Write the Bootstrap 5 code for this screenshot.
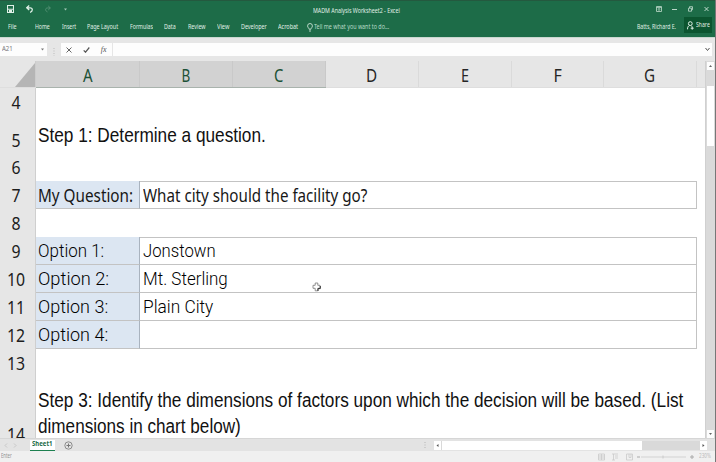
<!DOCTYPE html>
<html lang="en">
<head>
<meta charset="utf-8">
<meta name="viewport" content="width=device-width, initial-scale=1">
<title>MADM Analysis Worksheet2 - Excel</title>
<link href="https://cdn.jsdelivr.net/npm/bootstrap@5.3.0/dist/css/bootstrap.min.css" rel="stylesheet">
<style>
html,body{height:462px;overflow:hidden}
body{font:6.6px/1 "Noto Sans","Open Sans",sans-serif;color:#555;background:#e6e6e6}
svg{display:block;fill:none;stroke:currentColor;flex:none}
.app{width:716px;height:462px;border-right:1px solid #777}
.ribbon{height:37px;background:#1d6c48;color:#e0f0e7;border-top:1px solid #24593f}
.titlebar{height:16px;display:grid;grid-template-columns:7px 19px 19px 19px 249px 1fr 16px 16px 16px 11px}
.menus{height:20px;display:grid;grid-template-columns:8px 27px 27px 25px 43px 34px 24px 29px 24px 37px 29px 7px 1fr 47px 28px;padding-right:3px}
.menus>*,.titlebar>*{display:flex;align-items:center;min-width:0}
.share{background:#0c5530;height:16px;padding-left:3px;gap:2px}
.tell{color:#b9dcc9}
.fbar{height:24px;padding-top:5px;border-top:1px solid #c9d8d0}
.fbox{background:#fdfdfd;height:13px}
.namebox{width:47px;padding:0 3px 0 2px;color:#777}
.fdots{width:14px;color:#bbb}
.ftools{width:51px;margin-right:1px}
.finput{margin-right:3px;padding-right:2px}
.sheet{height:377px}
.gridarea{width:705px;background:#fff;overflow:hidden}
.heads,.sheetrow{display:grid;grid-template-columns:36px 104px 93px 93px 93px 93px 92px 93px 8px}
.heads{height:27px;background:#e6e6e6;font-size:18px;line-height:28px;color:#262626;text-align:center;border-bottom:1px solid #dedede}
.heads>div{border-right:1px solid #dadada;height:26px}
.heads>.picked{background:#d2d2d2;color:#1c5136;border-right-color:#c9c9c9;box-shadow:0 1px #a9b3ad}
.heads>.corner{border-right:1px solid #ccc}
.corner svg{margin-left:15px}
.sheetrow{grid-template-columns:36px 104px 557px;height:28px}
.num{background:#e6e6e6;border-right:1px solid #cfcfcf;border-bottom:1px solid #d4d4d4;font-size:17.6px;text-align:center;line-height:28px;color:#1d1d1d;padding-right:2px}
.r4{height:27px}.r5{height:38px}.r14{height:63px}
.r5 .num{padding-top:11px}
.r13{height:27px}
.r14 .num{padding-top:46px;line-height:24px;border-bottom:0}
.lab,.val{white-space:nowrap;color:#171717;font-size:18px;line-height:28px;padding-left:3px;border-bottom:1px solid #c3c3c3;border-right:1px solid #c3c3c3;height:28px}
.lab{background:#dce6f2;border-right-color:#a9b3bf;padding-left:2px}
.opt .lab,.opt .val{font-family:Roboto,sans-serif;font-weight:300;font-size:18.8px;color:#000}
.r6 .edge,.r8 .edge{border-bottom:1px solid #c3c3c3;grid-column:2/4}
.step{grid-column:2/4;font:20.4px/26px "Liberation Sans",Arial,sans-serif;color:#111;padding:7px 0 0 2px;white-space:nowrap}
.r14 .step{font-size:20px;padding-top:11px}
.fit{display:inline-block;white-space:nowrap;transform-origin:0 50%}
.num .fit,.heads .fit,.sheettab .fit{transform-origin:50% 50%}
.vscroll{width:10px;background:#dadada;padding:1px 1px 0 1px;border-left:1px solid #d0d0d0}
.vbtn{height:8px;background:#fdfdfd;width:7px}
.vthumb{height:60px;margin-top:16px;background:#fff;width:7px}
.tabs-row{height:13px;background:#e3e3e3;border-top:1px solid #d6d6d6}
.sheettab{width:25px;height:11px;background:#fff;color:#1d6c48;font-weight:700;border-bottom:1px solid #1d8050;margin-left:13px}
.addtab{margin-left:9px}
.track{margin-left:1px}
.zoomlevel{color:#bbb}
.hscroll{width:273px;margin-right:8px;height:9px;background:#d9d9d9}
.status{height:11px;background:#f0f0f0;color:#909090;padding:0 4px 0 1px}
.fx{font-family:"Liberation Serif",serif;font-size:8px}
.pointer{position:absolute;left:312px;top:282px}
</style>
</head>
<body>
<div class="app d-flex flex-column">
  <header class="ribbon">
    <div class="titlebar">
      <div></div>
      <div><svg width="7" height="8" viewBox="0 0 7 8"><path d="M.5.5h6v7h-6zM1 4.2h5" stroke-width="1.1"/><path d="M2 5h3v2.5H2z" fill="currentColor" stroke="none"/></svg></div>
      <div><svg width="7" height="8" viewBox="0 0 7 8"><path d="M3.2.5.7 2.8l2.5 2.3M.9 2.8h3.2c3 0 2.8 3.7 0 4.6" stroke-width="1.3"/></svg></div>
      <div><svg width="6" height="8" viewBox="0 0 7 8" opacity=".3"><path d="m3.8.5 2.5 2.3-2.5 2.3M6.1 2.8H2.9c-3 0-2.8 3.7 0 4.6"/></svg></div>
      <div><svg width="3" height="3" viewBox="0 0 3 3" opacity=".7"><path d="M0 .5h3L1.5 2.5z" fill="currentColor" stroke="none"/></svg></div>
      <div class="pt-1"><span class="fit" data-w="87">MADM Analysis Worksheet2 - Excel</span></div>
      <div><svg width="6" height="6" viewBox="0 0 6 6" opacity=".75"><path d="M.5.5h5v5h-5zM.5 1.6h5M3 5V2.5M2 3.5l1-1 1 1" stroke-width=".9"/></svg></div>
      <div><svg width="5" height="6" viewBox="0 0 5 6" opacity=".8"><path d="M0 3.5h5"/></svg></div>
      <div><svg width="5" height="6" viewBox="0 0 5 6" opacity=".85"><path d="M.5 2.2h3v3h-3zM1.5 2V.7h3v3H3.7" stroke-width=".8"/></svg></div>
      <div><svg width="5" height="6" viewBox="0 0 5 6"><path d="m.5 1 4 4m0-4-4 4" stroke-width=".8"/></svg></div>
    </div>
    <nav class="menus">
      <div></div>
      <div><span class="fit" data-w="9">File</span></div>
      <div><span class="fit" data-w="15">Home</span></div>
      <div><span class="fit" data-w="14">Insert</span></div>
      <div><span class="fit" data-w="31">Page Layout</span></div>
      <div><span class="fit" data-w="23">Formulas</span></div>
      <div><span class="fit" data-w="12">Data</span></div>
      <div><span class="fit" data-w="18">Review</span></div>
      <div><span class="fit" data-w="12">View</span></div>
      <div><span class="fit" data-w="26">Developer</span></div>
      <div><span class="fit" data-w="20">Acrobat</span></div>
      <div><svg width="6" height="9" viewBox="0 0 6 9"><path d="M2 6.2C2 5 .6 4.6.6 2.9a2.400 2.400 0 0 1 4.800 0C5.400 4.600 4 5 4 6.200zM2 8h2" stroke-width=".8"/></svg></div>
      <div class="tell"><span class="fit" data-w="75">Tell me what you want to do...</span></div>
      <div><span class="fit" data-w="39">Batts, Richard E.</span></div>
      <div class="share"><svg width="7" height="9" viewBox="0 0 7 9"><circle cx="3.300" cy="2.600" r="1.900"/><path d="M.5 8.300C.5 6 1.300 5 2.500 4.500M4 4.500l1 1.200M3.700 7.200h3M5.200 5.700v3"/></svg><span class="fit" data-w="14">Share</span></div>
    </nav>
  </header>

  <div class="fbar d-flex">
    <div class="fbox namebox d-flex align-items-center justify-content-between"><span class="fit" data-w="11">A21</span><svg width="3" height="3" viewBox="0 0 3 3"><path d="M0 .5h3L1.500 2.500z" fill="currentColor" stroke="none"/></svg></div>
    <div class="fdots d-flex align-items-center justify-content-center"><svg width="2" height="8" viewBox="0 0 2 8"><path d="M1 0v8" stroke-dasharray="1 1.500"/></svg></div>
    <div class="fbox ftools d-flex align-items-center justify-content-around">
      <svg width="6" height="6" viewBox="0 0 6 6"><path d="m.5.5 5 5m0-5-5 5" stroke-width=".9"/></svg>
      <svg width="7" height="6" viewBox="0 0 7 6"><path d="m.7 3.300 1.800 1.900L6.300.5" stroke-width="1.200"/></svg>
      <i class="fx">fx</i>
    </div>
    <div class="fbox finput flex-grow-1 d-flex align-items-center justify-content-end"><svg width="5" height="5" viewBox="0 0 5 5"><path d="m.5 1 2 2.500 2-2.500"/></svg></div>
  </div>

  <main class="sheet d-flex">
    <div class="gridarea">
      <div class="heads">
        <div class="corner"><svg width="20" height="26" viewBox="0 0 20 26"><path d="M20 2v24H0z" fill="#b5b5b5" stroke="none"/></svg></div>
        <div class="picked"><span class="fit" data-w="10">A</span></div>
        <div class="picked"><span class="fit" data-w="9">B</span></div>
        <div class="picked"><span class="fit" data-w="9">C</span></div>
        <div><span class="fit" data-w="11">D</span></div>
        <div><span class="fit" data-w="8">E</span></div>
        <div><span class="fit" data-w="8">F</span></div>
        <div><span class="fit" data-w="11">G</span></div>
      </div>
      <div class="sheetrow r4"><div class="num"><span class="fit" data-w="9">4</span></div></div>
      <div class="sheetrow r5"><div class="num"><span class="fit" data-w="9">5</span></div><div class="step"><span class="fit" data-w="228">Step 1: Determine a question.</span></div></div>
      <div class="sheetrow r6"><div class="num"><span class="fit" data-w="9">6</span></div><div class="edge"></div></div>
      <div class="sheetrow"><div class="num"><span class="fit" data-w="9">7</span></div><div class="lab"><span class="fit" data-w="95">My Question:</span></div><div class="val"><span class="fit" data-w="224">What city should the facility go?</span></div></div>
      <div class="sheetrow r8"><div class="num"><span class="fit" data-w="9">8</span></div><div class="edge"></div></div>
      <div class="sheetrow opt"><div class="num"><span class="fit" data-w="9">9</span></div><div class="lab"><span class="fit" data-w="66">Option 1:</span></div><div class="val"><span class="fit" data-w="73">Jonstown</span></div></div>
      <div class="sheetrow opt"><div class="num"><span class="fit" data-w="18">10</span></div><div class="lab"><span class="fit" data-w="71">Option 2:</span></div><div class="val"><span class="fit" data-w="85">Mt. Sterling</span></div></div>
      <div class="sheetrow opt"><div class="num"><span class="fit" data-w="18">11</span></div><div class="lab"><span class="fit" data-w="70">Option 3:</span></div><div class="val"><span class="fit" data-w="70">Plain City</span></div></div>
      <div class="sheetrow opt"><div class="num"><span class="fit" data-w="18">12</span></div><div class="lab"><span class="fit" data-w="70">Option 4:</span></div><div class="val"></div></div>
      <div class="sheetrow r13"><div class="num"><span class="fit" data-w="18">13</span></div></div>
      <div class="sheetrow r14"><div class="num"><span class="fit" data-w="18">14</span></div><div class="step"><span class="fit" data-w="645">Step 3: Identify the dimensions of factors upon which the decision will be based. (List</span><br><span class="fit" data-w="203">dimensions in chart below)</span></div></div>
    </div>
    <div class="vscroll d-flex flex-column">
      <div class="vbtn d-flex align-items-center justify-content-center"><svg width="3" height="2" viewBox="0 0 3 2"><path d="M0 2h3L1.500 0z" fill="#666" stroke="none"/></svg></div>
      <div class="vthumb"></div>
      <div class="vbtn mt-auto d-flex align-items-center justify-content-center"><svg width="3" height="2" viewBox="0 0 3 2"><path d="M0 0h3L1.500 2z" fill="#666" stroke="none"/></svg></div>
    </div>
  </main>

  <div class="tabs-row d-flex align-items-center">
    <svg class="ms-1" width="13" height="5" viewBox="0 0 13 5"><path d="M3 .5 1 2.500l2 2M10 .5l2 2-2 2" stroke-width=".8" stroke="#c0c0c0"/></svg>
    <div class="sheettab d-flex align-items-center justify-content-center"><span class="fit" data-w="20">Sheet1</span></div>
    <svg class="addtab" width="9" height="9" viewBox="0 0 9 9"><g stroke="#777"><circle cx="4.500" cy="4.500" r="3.700" stroke-width=".8"/><path d="M2.500 4.500h4M4.500 2.500v4"/></g></svg>
    <svg class="ms-auto me-2" width="2" height="7" viewBox="0 0 2 7"><path d="M1 0v7" stroke-dasharray="1 1.500" stroke="#b5b5b5"/></svg>
    <div class="hscroll d-flex justify-content-between">
      <div class="d-flex">
        <svg width="7" height="9" viewBox="0 0 7 9"><path d="M0 0h7v9H0z" fill="#fff" stroke="none"/><path d="M4.500 3v3L2.500 4.500z" fill="#555" stroke="none"/></svg>
        <svg class="track" width="200" height="9"><path d="M0 0h200v9H0z" fill="#fff" stroke="none"/></svg>
      </div>
      <svg width="7" height="9" viewBox="0 0 7 9"><path d="M0 0h7v9H0z" fill="#fff" stroke="none"/><path d="M2.500 3v3l2-1.500z" fill="#555" stroke="none"/></svg>
    </div>
  </div>
  <footer class="status d-flex align-items-center">
    <span class="fit" data-w="11">Enter</span>
    <svg class="ms-auto" width="92" height="8" viewBox="0 0 92 8"><g stroke="#cacaca"><path d="M.5 1h6v6h-6zM.5 3h6M.5 5h6M3.500 1v6M14 1h6M15.500 1v6M17 3h3M17 5h3M14 7h3M28.500 1h6v6h-6zM31 1v3.500h2V1" stroke-width=".8"/><path d="M43 4h45" stroke-width=".8"/><path d="M39 4h3" stroke="#aaa"/><path d="M65 2.500v3"/></g></svg>
    <svg width="5" height="8" viewBox="0 0 5 8"><path d="M0 4h4M2 2v4" stroke="#aaa"/></svg>
    <span class="fit ms-1 zoomlevel" data-w="12">230%</span>
  </footer>
</div>
<svg class="pointer" width="9" height="10" viewBox="0 0 9 10"><path d="M3.200 1h2.600v2.300H8v3H5.800v2.500H3.200V6.300H1v-3h2.200z" fill="#fff" stroke="#777" stroke-width=".8"/><path d="M6 9V6.600h2.300V4" stroke="#333"/></svg>
<script src="https://cdn.jsdelivr.net/npm/bootstrap@5.3.0/dist/js/bootstrap.bundle.min.js"></script>
<script>
document.querySelectorAll('.fit').forEach(function (el) {
  var natural = el.offsetWidth, width = +el.dataset.w;
  el.style.transform = 'scaleX(' + width / natural + ')';
  if (!el.closest('.num, .heads, .sheettab')) el.style.marginRight = (width - natural) + 'px';
});
</script>
</body>
</html>
